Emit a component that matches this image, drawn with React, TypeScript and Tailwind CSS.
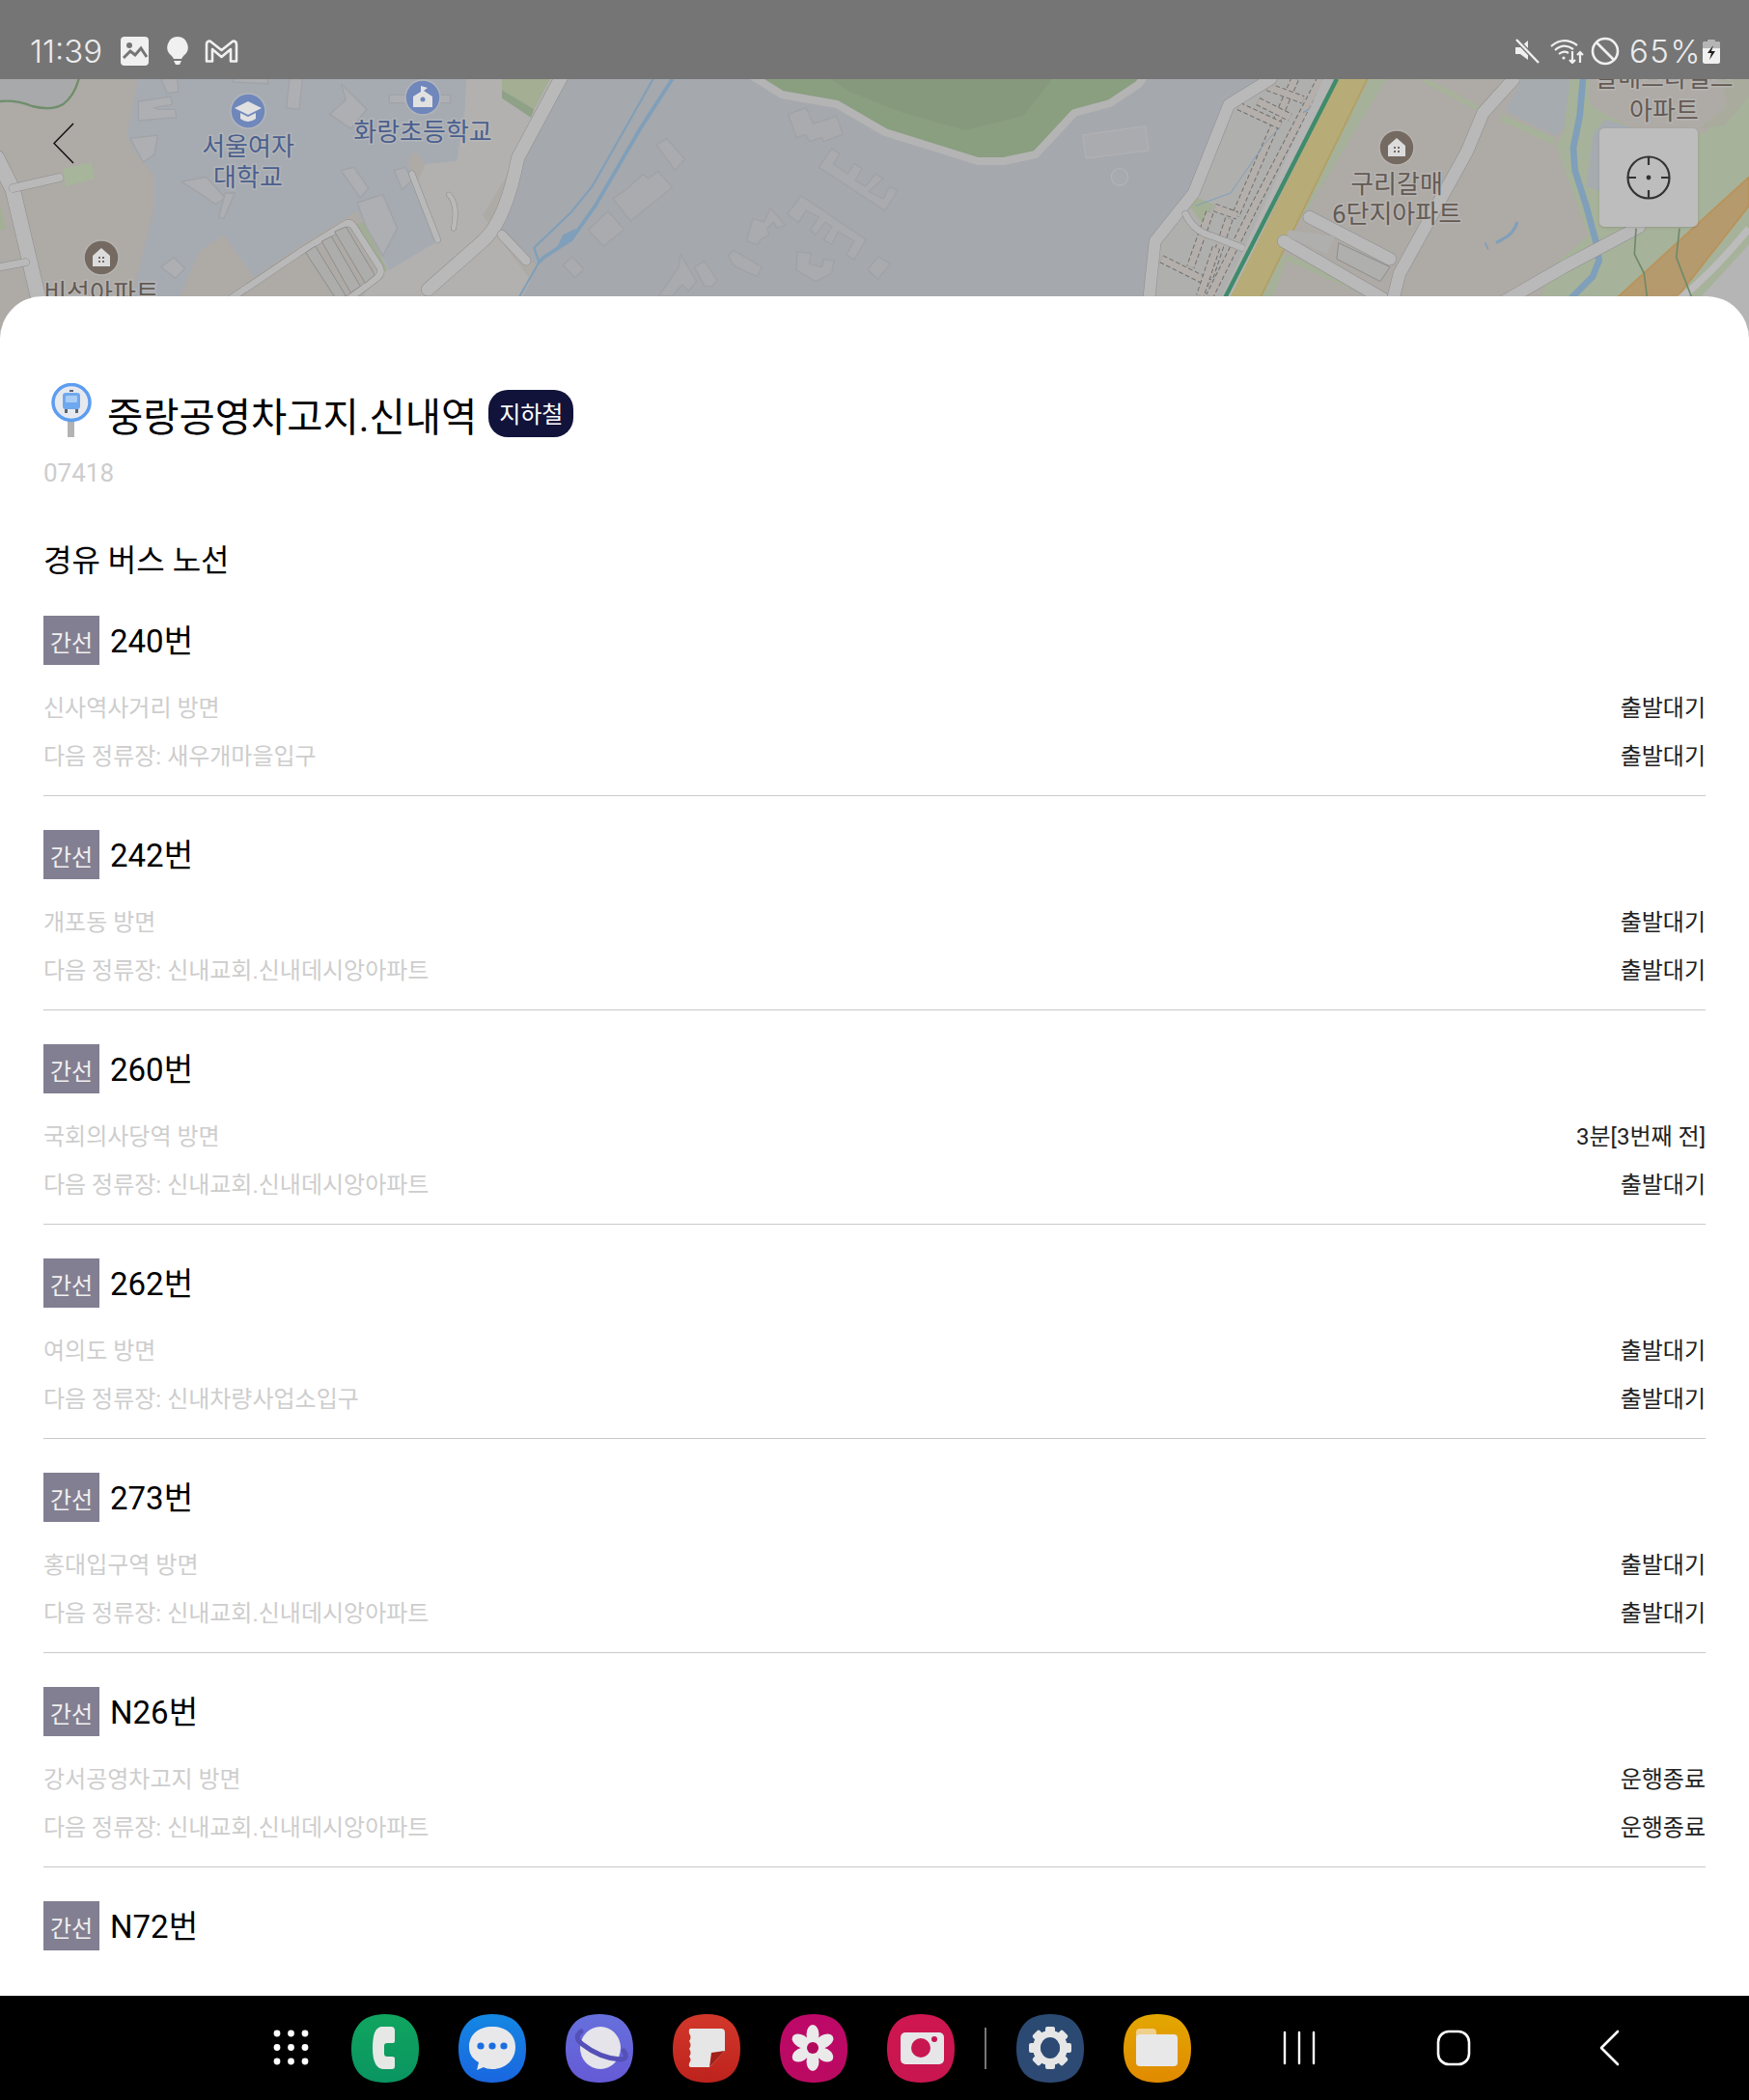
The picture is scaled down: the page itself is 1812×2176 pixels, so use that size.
import type { ReactNode } from 'react';

const routes = [
  { no: '240번', dir: '신사역사거리 방면', next: '새우개마을입구', a: '출발대기', b: '출발대기' },
  { no: '242번', dir: '개포동 방면', next: '신내교회.신내데시앙아파트', a: '출발대기', b: '출발대기' },
  { no: '260번', dir: '국회의사당역 방면', next: '신내교회.신내데시앙아파트', a: '3분[3번째 전]', b: '출발대기' },
  { no: '262번', dir: '여의도 방면', next: '신내차량사업소입구', a: '출발대기', b: '출발대기' },
  { no: '273번', dir: '홍대입구역 방면', next: '신내교회.신내데시앙아파트', a: '출발대기', b: '출발대기' },
  { no: 'N26번', dir: '강서공영차고지 방면', next: '신내교회.신내데시앙아파트', a: '운행종료', b: '운행종료' },
];

const bldg = [
  '890,115 945,95 968,145 1040,120 1060,178 1000,200 995,188 955,200 945,178 915,188',
  '480,210 512,190 568,255 538,290',
  '345,378 385,350 438,302 455,315 485,293 530,342 400,447',
  '268,475 330,417 380,473 315,525',
  '190,585 218,557 255,597 227,623',
  '985,280 1025,222 1050,238 1030,270 1075,300 1095,268 1120,285 1098,320 1130,340 1160,300 1185,315 1140,355 1185,378 1205,340 1230,352 1190,415',
  '888,425 930,368 1132,505 1095,567 1070,552 1095,510 1045,480 1025,520 1000,505 1025,465 1005,450 975,490 958,475 985,435 945,415 922,452',
  '760,510 780,440 815,450 835,407 880,460 855,470 845,450 825,470 830,490 805,505 795,520',
  '703,555 720,538 808,590 793,620 750,600 720,585',
  '597,590 630,572 668,630 655,650 630,650',
  '488,680 550,590 555,550 605,635 580,665 560,645 530,680',
  '918,542 960,548 955,580 995,590 1000,565 1032,570 1025,610 975,635 915,600',
  '1137,598 1170,557 1208,580 1168,628',
];

const schoolBldg = [
  '500,5 550,5 555,45 520,50',
  '430,75 530,60 535,85 480,95 490,100 545,100 548,125 430,135',
  '405,190 490,180 480,240 445,265',
  '725,5 830,5 835,20 725,15',
  '900,5 940,5 930,100 890,95',
  '1060,20 1140,100 1090,160 1025,115 1075,70',
  '565,325 640,310 700,375 670,395 620,360',
  '700,360 730,360 695,440 680,435',
  '1060,290 1100,280 1145,345 1120,375',
  '1110,390 1190,365 1235,470 1190,555 1140,470',
  '500,590 540,560 575,595 545,625',
  '1225,290 1260,280 1280,320 1250,350',
  '1210,55 1400,55 1400,80 1210,80',
];

const lanes = [
  'M905,5 L720,430',
  'M985,5 L780,400 L640,680',
  'M730,90 L860,150',
  'M790,75 L890,125',
  'M820,30 L930,70',
  'M655,405 L725,430',
  'M640,420 L580,590',
  'M700,440 L640,620',
  'M490,565 L640,640',
  'M660,530 L610,680',
];

function MapLabel({ x, y, fill, children }: { x: number; y: number; fill: string; children: ReactNode }) {
  return (
    <text
      x={x}
      y={y}
      fill={fill}
      fontSize={26}
      textAnchor="middle"
      stroke="#bcbcbc"
      strokeWidth={3}
      strokeOpacity={0.6}
      paintOrder="stroke"
      fontFamily="Roboto, 'Noto Sans CJK KR', sans-serif"
    >
      {children}
    </text>
  );
}

function Road({ d, w }: { d: string; w: number }) {
  return (
    <>
      <path d={d} fill="none" stroke="#8d8d8d" strokeWidth={w + 3} strokeLinejoin="round" strokeLinecap="round" />
      <path d={d} fill="none" stroke="#b9b9b9" strokeWidth={w} strokeLinejoin="round" strokeLinecap="round" />
    </>
  );
}

function HousePin({ x, y }: { x: number; y: number }) {
  return (
    <g transform={`translate(${x} ${y})`}>
      <circle r={18} fill="#756a61" stroke="#b5b3b0" strokeWidth={1.5} />
      <path d="M-9,9 V-2 L0,-10 L9,-2 V9 Z" fill="#dcdcdc" />
      <rect x={-3} y={-1} width={2} height={2} fill="#756a61" />
      <rect x={1} y={-1} width={2} height={2} fill="#756a61" />
      <rect x={-3} y={3} width={2} height={2} fill="#756a61" />
      <rect x={1} y={3} width={2} height={2} fill="#756a61" />
    </g>
  );
}

function CityMap() {
  return (
    <svg viewBox="0 82 1812 270" className="block h-[270px] w-full">
      <rect x={0} y={82} width={1812} height={270} fill="#aeaaa6" />

      {/* 왼쪽: 학교 구역 */}
      <g transform="translate(0 80) scale(0.33333)">
        <polygon points="0,0 240,0 200,85 160,105 60,85 0,75" fill="#a8a9ab" />
        <path d="M0,75 Q50,70 100,90 Q160,105 195,85 Q230,60 245,5" fill="none" stroke="#6f8e6a" strokeWidth={7} />
        <polygon points="1450,0 1745,0 1610,250 1500,430 1700,700 1120,700" fill="#b2b1af" />
        <polygon points="0,5 150,5 100,100 0,40" transform="translate(1560 0)" fill="#a3ae93" />
        <polygon points="0,40 100,100 90,125 0,65" transform="translate(1560 0)" fill="#8fa187" />
        <polygon
          points="1450,5 1445,100 1420,260 1320,270 1290,225 1265,260 1360,510 1210,600 1110,415 930,525 790,620 695,490 620,540 555,690 410,690 440,560 480,400 480,310 415,225 395,180 430,5"
          fill="#a6abb2"
        />
        {schoolBldg.map((p) => (
          <polygon key={p} points={p} fill="#aeafb2" stroke="#a0a3a8" strokeWidth={4} />
        ))}
        <polygon points="195,285 285,265 295,315 205,340" fill="#a7b59b" />
        <polygon points="0,400 20,470 0,475" fill="#a3b096" />
        <polygon points="1100,460 1130,450 1205,600 1180,610" fill="#a1ae95" />
        <Road d="M-10,250 L40,350 L120,690" w={46} />
        <Road d="M40,345 L185,312" w={24} />
        <Road d="M0,590 L80,575" w={22} />
        <Road d="M1280,300 L1360,505" w={18} />
        <Road d="M1395,365 Q1425,395 1410,470" w={14} />
        <Road d="M700,700 L930,545 L1075,455 Q1090,450 1100,465 L1180,590 Q1190,610 1170,625 L1070,700" w={20} />
        <polygon points="950,545 980,525 1075,680 1045,690" fill="#adadab" stroke="#8e8e8e" strokeWidth={3} />
        <polygon points="1000,510 1030,495 1120,650 1090,670" fill="#adadab" stroke="#8e8e8e" strokeWidth={3} />
        <polygon points="1040,480 1075,465 1165,615 1135,640" fill="#adadab" stroke="#8e8e8e" strokeWidth={3} />
      </g>

      {/* 가운데: 넓은 부지 */}
      <polygon
        points="580,82 1310,82 1275,107 1237,200 1197,250 1187,352 520,352 557,275 548,270 520,240 510,235 520,213"
        fill="#a5a8ad"
      />
      <polygon
        points="787,82 810,98 867,108 917,137 1013,167 1040,167 1073,160 1113,117 1150,107 1180,87 1187,82"
        fill="#8a9e80"
      />
      <polygon points="860,82 1090,82 1060,120 1000,135 930,115 880,95" fill="#86997c" />
      <path
        d="M775,76 L810,98 L867,108 L917,137 L1013,167 L1040,167 L1073,160 L1113,117 L1150,107 L1180,87 L1187,76"
        fill="none"
        stroke="#b4b4b4"
        strokeWidth={8}
        strokeLinejoin="round"
      />
      <g transform="translate(520 80) scale(0.33333)">
        {bldg.map((p) => (
          <polygon key={p} points={p} fill="#aaabae" stroke="#a0a2a6" strokeWidth={4} />
        ))}
        <path d="M470,5 L400,130 L280,340 L215,420 L100,530 L115,575 L50,690" fill="none" stroke="#7f9fba" strokeWidth={6} />
        <path d="M530,5 L430,160 L290,400 L215,505 L130,560 L115,575" fill="none" stroke="#7f9fba" strokeWidth={11} />
        <polygon points="190,490 230,470 215,510 170,530" fill="#7f9fba" />
        <Road d="M-230,660 L-60,510 Q10,450 50,250 L190,-10" w={40} />
        <Road d="M0,490 L75,570" w={28} />
      </g>

      {/* 오른쪽: 도로와 단지 */}
      <g transform="translate(1040 80) scale(0.33333)">
        <polygon points="700,85 830,5 1035,5 680,700 450,700 470,510 590,360" fill="#afafae" />
        <polygon points="245,180 440,152 450,228 255,252" fill="#aaabae" stroke="#b0b1b4" strokeWidth={4} />
        <circle cx={360} cy={310} r={26} fill="#a7aaae" stroke="#b2b3b5" strokeWidth={4} />
        <polygon points="600,375 655,395 620,460 580,405" fill="#a4b095" />
        {lanes.map((d) => (
          <g key={d}>
            <path d={d} fill="none" stroke="#6f6f6f" strokeWidth={26} strokeDasharray="14 8" />
            <path d={d} fill="none" stroke="#b4afab" strokeWidth={20} />
          </g>
        ))}
        <path d="M595,400 L705,360 L815,200 L855,160" fill="none" stroke="#7f9fba" strokeWidth={3} />
        <path d="M975,85 L930,110" fill="none" stroke="#7f9fba" strokeWidth={4} />
        <Road d="M830,5 L700,85 L590,360 L470,510 L450,700" w={36} />
        <Road d="M565,425 Q590,480 650,495 L740,530" w={20} />
        <path d="M1010,5 L690,690" fill="none" stroke="#b5b5b5" strokeWidth={30} />
        <polygon points="1130,5 1190,5 950,400 860,530 880,565 830,700 790,700" fill="#a6b199" />
        <polygon points="1040,5 1130,5 790,700 695,700" fill="#b7ab78" />
        <path d="M1130,5 L790,700" fill="none" stroke="#b39f62" strokeWidth={5} />
        <path d="M1035,5 L680,700" fill="none" stroke="#3f8b6c" strokeWidth={13} />
        <path d="M880,560 L1200,700" fill="none" stroke="#a6b199" strokeWidth={20} />
        <Road d="M950,435 L1200,565" w={38} />
        <Road d="M870,510 L1180,690" w={38} />
        <polygon points="885,475 1028,495 1005,550 880,495" fill="#afafad" />
        <polygon points="1040,515 1200,590 1170,635 1035,565" fill="#afafad" stroke="#8e8e8e" strokeWidth={3} />
      </g>
      <g transform="translate(1440 80) scale(0.33333)">
        <polygon points="600,5 1116,5 1116,830 420,830 500,590 620,490" fill="#a7b29a" />
        <polygon points="620,5 1040,5 1050,80 985,170 900,190 755,160 615,85" fill="#aeaaa6" />
        <polygon points="960,160 1050,90 1030,5 1116,5 1116,60 1040,150" fill="#a9ab9d" />
        <polygon points="410,5 590,5 575,130 515,182 360,105" fill="#a6abb0" />
        <polygon points="560,5 600,5 640,130 610,340 650,470 620,500 515,210 540,170" fill="#a7b29a" />
        <path d="M100,5 L290,105" fill="none" stroke="#a7b29a" strokeWidth={16} />
        <path d="M345,125 L510,200" fill="none" stroke="#a7b29a" strokeWidth={22} />
        <polygon points="670,130 760,160 700,370 610,340 630,180" fill="#a6abb0" />
        <path d="M600,5 L590,120 L570,220 L575,290 L610,400 L640,510 L650,570 L630,620 L560,690" fill="none" stroke="#7f9fba" strokeWidth={20} />
        <path d="M395,450 Q390,475 365,495 L330,515" fill="none" stroke="#7f9fba" strokeWidth={9} />
        <path d="M296,515 L305,535" fill="none" stroke="#7f9fba" strokeWidth={5} />
        <Road d="M775,465 L540,590 L350,700" w={38} />
        <Road d="M385,5 L290,110 L240,230 L30,610 L10,690" w={38} />
        <polygon points="1116,310 1116,400 880,700 690,700" fill="#b59a6e" stroke="#ba9258" strokeWidth={5} />
        <path d="M1116,470 Q1000,610 900,690" fill="none" stroke="#bcbcbc" strokeWidth={22} />
        <polygon points="1116,520 1116,830 960,830 960,690" fill="#b5b5b5" />
        <path d="M765,470 L760,550 L790,610 L800,690" fill="none" stroke="#6f8a68" strokeWidth={5} />
        <path d="M900,470 L890,560 L940,690" fill="none" stroke="#6f8a68" strokeWidth={5} />
      </g>

      {/* 핀 */}
      <g transform="translate(257 115)">
        <circle r={18} fill="#6f87bb" stroke="#b3b6bb" strokeWidth={1.5} />
        <path d="M0,-10 L14,-3 L0,4 L-14,-3 Z" fill="#e1e1e1" />
        <path d="M-8,2 L0,6 L8,2 V8 Q0,14 -8,8 Z" fill="#e1e1e1" />
      </g>
      <g transform="translate(438 101)">
        <circle r={18} fill="#6f87bb" stroke="#b3b6bb" strokeWidth={1.5} />
        <path d="M-10,10 V-1 L-2,-6 V-12 L5,-10 L1,-7 L10,-1 V10 Z" fill="#e1e1e1" />
        <circle cy={2} r={2.5} fill="#6f87bb" />
      </g>
      <HousePin x={105} y={267} />
      <HousePin x={1447} y={153} />

      <MapLabel x={257} y={161} fill="#4a5f8f">서울여자</MapLabel>
      <MapLabel x={257} y={193} fill="#4a5f8f">대학교</MapLabel>
      <MapLabel x={438} y={146} fill="#4a5f8f">화랑초등학교</MapLabel>
      <MapLabel x={105} y={313} fill="#645a52">비석아파트</MapLabel>
      <MapLabel x={1447} y={200} fill="#645a52">구리갈매</MapLabel>
      <MapLabel x={1447} y={231} fill="#645a52">6단지아파트</MapLabel>
      <MapLabel x={1724} y={90} fill="#645a52">갈매스타일스</MapLabel>
      <MapLabel x={1724} y={124} fill="#645a52">아파트</MapLabel>
    </svg>
  );
}

function StatusBar() {
  return (
    <div className="flex h-[82px] shrink-0 items-end justify-between bg-[#757575] pb-[14px] pl-[31px] pr-[30px] font-['Inter',sans-serif] text-[33px] font-light leading-[30px] text-[#ececec]">
      <div className="flex items-center">
        <span className="w-[94px]">11:39</span>
        <svg viewBox="0 0 29 30" className="h-[30px] w-[29px]">
          <rect width={29} height={30} rx={4} fill="#f0f0f0" />
          <circle cx={9} cy={9} r={3} fill="#757575" />
          <path d="M3 22 L10 15 L15 19 L21 12 L27 21" fill="none" stroke="#757575" strokeWidth={3} />
        </svg>
        <svg viewBox="0 0 22 30" className="ml-[19px] h-[30px] w-[22px]">
          <path d="M11 0 A11 11 0 0 1 17 20 L15 23 H7 L5 20 A11 11 0 0 1 11 0Z" fill="#f0f0f0" />
          <path d="M7 25 H15 L13 29 H9 Z" fill="#f0f0f0" />
        </svg>
        <svg viewBox="0 0 35 24" className="ml-[17px] h-[24px] w-[35px]">
          <path d="M2 5 Q2 1.5 5.5 1.5 L17.5 11 L29.5 1.5 Q33 1.5 33 5 V22.5 H27 V10 L17.5 18 L8 10 V22.5 H2 Z" fill="none" stroke="#f0f0f0" strokeWidth={2.6} strokeLinejoin="round" />
        </svg>
      </div>
      <div className="flex items-center">
        <svg viewBox="0 0 26 26" className="h-[26px] w-[26px]">
          <path d="M1 9 H6 L14 2 V22 L6 16 H1 Z" fill="#f0f0f0" />
          <path d="M2 1 L25 25" stroke="#757575" strokeWidth={5} />
          <path d="M2 1 L25 25" stroke="#f0f0f0" strokeWidth={2.4} />
        </svg>
        <svg viewBox="0 0 36 26" className="ml-[11px] h-[26px] w-[36px]" fill="none" stroke="#f0f0f0" strokeWidth={2.2}>
          <path d="M1 8 Q14 -3 28 7" />
          <path d="M5 12 Q14 4 24 11" />
          <path d="M9 16 Q14 12 19 15" />
          <circle cx={14} cy={20} r={1.6} fill="#f0f0f0" stroke="none" />
          <path d="M23 13 V25 M20 22 L23 25 L26 22 M31 25 V14 M28 17 L31 14 L34 17" />
        </svg>
        <svg viewBox="0 0 30 30" className="ml-[6px] h-[30px] w-[30px]" fill="none" stroke="#f0f0f0" strokeWidth={2.6}>
          <circle cx={15} cy={15} r={13} />
          <path d="M6 6 L24 24" />
        </svg>
        <span className="ml-[10px] w-[76px] tracking-[1.5px]">65%</span>
        <svg viewBox="0 0 18 25" className="h-[25px] w-[18px]">
          <rect x={5} width={8} height={3} rx={1} fill="#b5b5b5" />
          <rect y={2} width={18} height={23} rx={2.5} fill="#f0f0f0" />
          <path d="M0 4.5 Q0 2 2.5 2 H15.5 Q18 2 18 4.5 V9 H0 Z" fill="#b5b5b5" />
          <path d="M11 6 L5 14 H9 L7 21 L13 12 H9 Z" fill="#222" />
        </svg>
      </div>
    </div>
  );
}

function BusStopIcon() {
  return (
    <svg viewBox="0 0 42 56" className="ml-2 h-[56px] w-[42px] shrink-0">
      <rect x={17} y={38} width={7} height={18} fill="#b3b3b3" />
      <ellipse cx={21} cy={20} rx={19} ry={18.5} fill="#e7e9ee" stroke="#5c9df0" strokeWidth={3.5} />
      <rect x={12} y={10} width={18} height={17} rx={3} fill="#6ea8ee" />
      <rect x={15} y={13} width={12} height={7} rx={1} fill="#a9cdf7" />
      <rect x={14} y={27} width={3} height={4} fill="#5a6475" />
      <rect x={25} y={27} width={3} height={4} fill="#5a6475" />
      <rect x={19} y={7} width={4} height={2} fill="#5a6475" />
    </svg>
  );
}

function Squircle({ id, from, to, children }: { id: string; from: string; to: string; children: ReactNode }) {
  return (
    <svg viewBox="0 0 70 71" className="h-[71px] w-[70px] shrink-0">
      <defs>
        <linearGradient id={id} x1="0" y1="0" x2="0" y2="1">
          <stop offset="0" stopColor={from} />
          <stop offset="1" stopColor={to} />
        </linearGradient>
      </defs>
      <path d="M35 0 C60 0 70 15 70 36 C70 57 60 71 35 71 C10 71 0 57 0 36 C0 15 10 0 35 0Z" fill={`url(#${id})`} />
      {children}
    </svg>
  );
}

function NavBar() {
  const petals = [0, 60, 120, 180, 240, 300];
  const teeth = [0, 45, 90, 135, 180, 225, 270, 315];
  return (
    <div className="flex h-[108px] shrink-0 items-center bg-black pl-[283px]">
      <svg viewBox="0 0 38 38" className="h-[38px] w-[38px] shrink-0" fill="#fff">
        {[4, 18.5, 33].map((cy) =>
          [4, 18.5, 33].map((cx) => <circle key={`${cx}-${cy}`} cx={cx} cy={cy} r={3.4} />),
        )}
      </svg>
      <div className="ml-[43px] flex gap-[41px]">
        <Squircle id="g-phone" from="#10a55f" to="#0a9561">
          <path d="M32 13 H41 Q45 13 45 17 V28 Q45 30 42 30 H37 Q34 30 34 33 V41 Q34 44 37 44 H42 Q45 44 45 46 V54 Q45 57 42 57 H34 Q22 57 22 35 Q22 13 32 13Z" fill="#e6e8e6" />
        </Squircle>
        <Squircle id="g-msg" from="#1487e2" to="#1a66e0">
          <path d="M35 13 C49 13 59 21 59 34 C59 47 49 57 35 57 C31 57 28 56 26 55 L19 58 L21 50 C14 46 11 41 11 34 C11 21 21 13 35 13Z" fill="#e8e8ea" />
          <circle cx={23} cy={33} r={3.6} fill="#1a6ee0" />
          <circle cx={35} cy={33} r={3.6} fill="#1a6ee0" />
          <circle cx={47} cy={33} r={3.6} fill="#1a6ee0" />
        </Squircle>
        <Squircle id="g-web" from="#6670dc" to="#655ad6">
          <ellipse cx={36} cy={35} rx={21} ry={22} fill="#e4e4ea" />
          <path d="M16 18 Q8 24 17 31 Q36 46 57 47 Q66 46 60 38" fill="none" stroke="#5450b8" strokeWidth={5} strokeLinecap="round" />
        </Squircle>
        <Squircle id="g-note" from="#d2382a" to="#bd231d">
          <path d="M19 15 H50 Q54 15 54 19 V38 L38 55 H19 Q16 55 17 51 Q20 47 17 44 Q20 40 17 36 Q20 32 17 28 Q20 24 17 20 Q16 15 19 15Z" fill="#e6e6e6" />
          <polygon points="38,55 40,40 54,38" fill="#a31f18" />
        </Squircle>
        <Squircle id="g-gallery" from="#bd0868" to="#bb0a62">
          {petals.map((r) => (
            <ellipse key={r} cx={34} cy={21} rx={6.5} ry={10} fill="#eaeaea" transform={`rotate(${r} 34 35)`} />
          ))}
          <circle cx={34} cy={35} r={6} fill="#b30a5e" />
        </Squircle>
        <Squircle id="g-cam" from="#cf1650" to="#c81650">
          <rect x={14} y={19} width={45} height={33} rx={5} fill="#e6e6e8" />
          <circle cx={35} cy={35} r={10} fill="#c81650" />
          <circle cx={49} cy={26} r={3} fill="#c81650" />
        </Squircle>
      </div>
      <div className="ml-[31px] h-[43px] w-[2px] shrink-0 bg-[#777]" />
      <div className="ml-[31px] flex gap-[41px]">
        <Squircle id="g-set" from="#2a4a72" to="#2e4a74">
          {teeth.map((r) => (
            <rect key={r} x={30} y={13} width={10} height={10} rx={2} fill="#e6e6e6" transform={`rotate(${r} 35 35)`} />
          ))}
          <circle cx={35} cy={35} r={14} fill="none" stroke="#e6e6e6" strokeWidth={8} />
          <ellipse cx={35} cy={35} rx={10} ry={11} fill="#2c4a73" />
        </Squircle>
        <Squircle id="g-file" from="#e3a700" to="#e08a00">
          <rect x={13} y={15} width={21} height={18} rx={4} fill="#efcf8a" />
          <rect x={13} y={21} width={43} height={33} rx={4} fill="#e8e8e8" />
        </Squircle>
      </div>
      <svg viewBox="0 0 34 36" className="ml-[95px] h-[36px] w-[34px]" stroke="#fff" strokeWidth={2.4} strokeLinecap="round">
        <path d="M2 2 V34 M17 2 V34 M32 2 V34" />
      </svg>
      <svg viewBox="0 0 36 38" className="ml-[125px] h-[38px] w-[36px]" fill="none" stroke="#fff" strokeWidth={2.6}>
        <rect x={2} y={2} width={32} height={34} rx={11} />
      </svg>
      <svg viewBox="0 0 22 38" className="ml-[132px] h-[38px] w-[22px]" fill="none" stroke="#fff" strokeWidth={2.6} strokeLinecap="round" strokeLinejoin="round">
        <path d="M20 2 L3 19 L20 36" />
      </svg>
    </div>
  );
}

function RouteItem({ no, dir, next, a, b }: { no: string; dir?: string; next?: string; a?: string; b?: string }) {
  return (
    <div className="h-[222px] shrink-0">
      <div className="flex h-[51px] items-center">
        <span className="flex h-[51px] w-[58px] items-center justify-center bg-[#837f92] pt-[7px] text-[24px] text-[#f0f0f0]">간선</span>
        <span className="ml-[11px] pt-[2px] text-[33px] text-black">{no}</span>
      </div>
      {dir && (
        <>
          <div className="mt-5 text-[24px] leading-[50px]">
            <div className="flex justify-between">
              <span className="text-[#cdcdcd]">{dir}</span>
              <span className="text-[#222]">{a}</span>
            </div>
            <div className="flex justify-between">
              <span className="text-[#cdcdcd]">다음 정류장: {next}</span>
              <span className="text-[#222]">{b}</span>
            </div>
          </div>
          <div className="mt-[15px] h-px bg-[#c9c9c9]" />
        </>
      )}
    </div>
  );
}

export default function App() {
  return (
    <div className="flex h-[2176px] w-[1812px] flex-col overflow-hidden bg-white font-['Roboto','Noto_Sans_CJK_KR',sans-serif]">
      <StatusBar />
      <div className="relative h-[270px] shrink-0">
        <CityMap />
        <svg viewBox="0 0 23 43" className="absolute left-[55px] top-[45px] h-[43px] w-[23px]" fill="none" stroke="#111" strokeWidth={1.5}>
          <path d="M21 1 L1 21.5 L21 42" />
        </svg>
        <div className="absolute left-[1657px] top-[51px] flex h-[102px] w-[102px] items-center justify-center rounded-[5px] bg-[#bdbdbd] shadow-sm">
          <svg viewBox="0 0 46 46" className="h-[46px] w-[46px]" fill="none" stroke="#333" strokeWidth={2.2}>
            <circle cx={23} cy={23} r={21.5} />
            <path d="M23 1 V10 M23 36 V45 M1 23 H10 M36 23 H45" />
            <circle cx={23} cy={23} r={2.4} fill="#333" stroke="none" />
          </svg>
        </div>
      </div>
      <div className="relative z-10 -mt-[45px] flex min-h-0 flex-1 flex-col overflow-hidden rounded-t-[44px] bg-white px-[45px] pt-[90px]">
        <div className="flex h-[56px] shrink-0 items-end">
          <BusStopIcon />
          <h1 className="-mb-[3px] ml-4 text-[40.5px] font-normal leading-[46px] text-black">중랑공영차고지.신내역</h1>
          <span className="ml-[12px] flex h-[49px] w-[88px] items-center justify-center rounded-[20px] bg-[#12133a] pt-[2px] text-[24px] text-white">지하철</span>
        </div>
        <div className="mt-[22px] shrink-0 text-[26px] leading-[30px] text-[#cdcdcd]">07418</div>
        <div className="mt-[56px] shrink-0 text-[32px] leading-[40px] text-black">경유 버스 노선</div>
        <div className="mt-[37px] flex flex-col">
          {routes.map((r) => (
            <RouteItem key={r.no} {...r} />
          ))}
          <RouteItem no="N72번" />
        </div>
      </div>
      <NavBar />
    </div>
  );
}
